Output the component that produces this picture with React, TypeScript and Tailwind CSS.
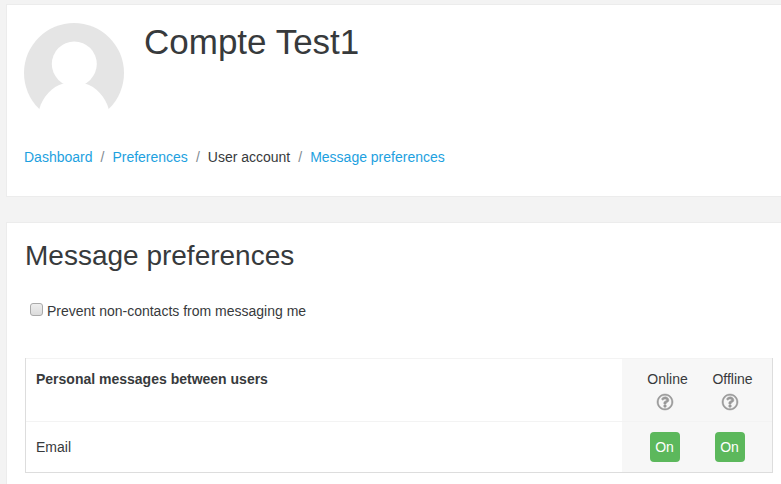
import { useState } from 'react';

const breadcrumbs = [
  { label: 'Dashboard', href: '#dashboard' },
  { label: 'Preferences', href: '#preferences' },
  { label: 'User account' },
  { label: 'Message preferences', href: '#message-preferences' },
];

const states = ['Online', 'Offline'];

function Avatar() {
  return (
    <svg viewBox="0 0 100 100" className="size-[100px] shrink-0" role="img" aria-label="Compte Test1">
      <circle cx="50" cy="50" r="50" fill="#e5e5e5" />
      <circle cx="50.3" cy="41" r="22.5" fill="#fff" />
      <path d="M15.300 86C18.500 74 28 63.500 39.300 60.500H61C72 63.500 81.500 74 84.700 86V101H15.300Z" fill="#fff" />
    </svg>
  );
}

function HelpIcon() {
  return (
    <svg viewBox="0 0 1536 1536" className="size-4" fill="#999" stroke="#999" strokeWidth="50" overflow="visible" aria-hidden="true">
      <path d="M880 1072v160q0 14-9 23t-23 9h-160q-14 0-23-9t-9-23v-160q0-14 9-23t23-9h160q14 0 23 9t9 23zm256-496q0 50-15 90t-45.500 69-52 44-59.500 36q-32 18-46.500 28t-26 24-11.500 29v32q0 14-9 23t-23 9h-160q-14 0-23-9t-9-23v-68q0-35 10.500-64.500t24-47.500 39-35.500 41-25.500 44.500-21q53-25 75-43t22-49q0-42-43.500-71.500t-95.500-29.500q-56 0-95 27-29 20-80 83-9 12-25 12-11 0-19-6l-108-82q-10-7-12-20t5-23q122-192 349-192 129 0 238.500 89.500t109.500 214.500zm-368-448q-130 0-248.500 51t-204 136.500-136.500 204-51 248.500 51 248.500 136.500 204 204 136.500 248.500 51 248.500-51 204-136.500 136.500-204 51-248.500-51-248.500-136.500-204-204-136.500-248.500-51zm768 640q0 209-103 385.500t-279.500 279.500-385.500 103-385.500-103-279.500-279.500-103-385.500 103-385.500 279.500-279.500 385.500-103 385.500 103 279.500 279.500 103 385.500z" />
    </svg>
  );
}

export default function App() {
  const [blocked, setBlocked] = useState(false);
  const [enabled, setEnabled] = useState<Record<string, boolean>>({ Online: true, Offline: true });

  return (
    <div className="min-h-screen overflow-hidden bg-[#f3f3f3] pt-1 pl-1.5 font-['Liberation_Sans',Arial,sans-serif] text-sm text-[#373a3c]">
      <header className="border-y border-l border-[#ececec] bg-white pt-[18px] pr-2 pb-[29px] pl-[17px]">
        <div className="flex items-start gap-5">
          <Avatar />
          <h1 className="text-[35px] leading-[38px]">Compte Test1</h1>
        </div>
        <nav aria-label="Breadcrumb" className="mt-6">
          <ol className="flex flex-wrap leading-5">
            {breadcrumbs.map((item, i) => (
              <li key={item.label} className="flex">
                {i > 0 && <span className="px-2 text-[#818a91]">/</span>}
                {item.href ? (
                  <a href={item.href} className="text-[#1da1e0] hover:underline">{item.label}</a>
                ) : (
                  <span>{item.label}</span>
                )}
              </li>
            ))}
          </ol>
        </nav>
      </header>

      <main className="mt-[25px] border-t border-l border-[#ececec] bg-white pt-[17px] pr-2 pb-6 pl-[18px]">
        <h2 className="text-[28px] leading-8">Message preferences</h2>

        <div className="mt-[27px] flex items-center gap-1 pl-[5px]">
          <input
            id="block-noncontacts"
            type="checkbox"
            checked={blocked}
            onChange={(e) => setBlocked(e.target.checked)}
            className="mb-1 size-[13px] appearance-none rounded-[3px] border border-[#aaa] bg-linear-to-b from-[#eee] to-[#dcdcdc] checked:from-[#1177d1] checked:to-[#1177d1]"
          />
          <label htmlFor="block-noncontacts" className="leading-6">Prevent non-contacts from messaging me</label>
        </div>

        <table className="mt-[35px] w-full border-separate border-spacing-0 border-x border-b border-[#ddd]">
          <thead>
            <tr className="h-[63px]">
              <th scope="col" className="border-t border-[#f3f3f3] px-2.5 pt-2.5 text-left align-top leading-5 font-bold">
                Personal messages between users
              </th>
              {/* one cell spans both states, as the toggles below do */}
              <th scope="col" className="w-[150px] border-t border-[#f3f3f3] bg-[#f7f7f7] px-2.5 pt-2.5 align-top font-normal">
                <div className="grid grid-cols-2">
                  {states.map((state) => (
                    <div key={state} className="flex flex-col items-center">
                      <span className="pl-1.5 leading-5">{state}</span>
                      <button type="button" aria-label={'Help with ' + state} className="mt-[5px]">
                        <HelpIcon />
                      </button>
                    </div>
                  ))}
                </div>
              </th>
            </tr>
          </thead>
          <tbody>
            <tr className="h-[51px]">
              <td className="border-t border-[#f3f3f3] px-2.5 leading-5">Email</td>
              <td className="border-t border-[#f3f3f3] bg-[#f7f7f7] px-2.5">
                <div className="grid grid-cols-2 justify-items-center">
                  {states.map((state) => (
                    <button
                      key={state}
                      type="button"
                      aria-pressed={enabled[state]}
                      onClick={() => setEnabled({ ...enabled, [state]: !enabled[state] })}
                      className="size-[30px] rounded bg-[#5cb85c] text-white"
                    >
                      {enabled[state] ? 'On' : 'Off'}
                    </button>
                  ))}
                </div>
              </td>
            </tr>
          </tbody>
        </table>
      </main>
    </div>
  );
}
